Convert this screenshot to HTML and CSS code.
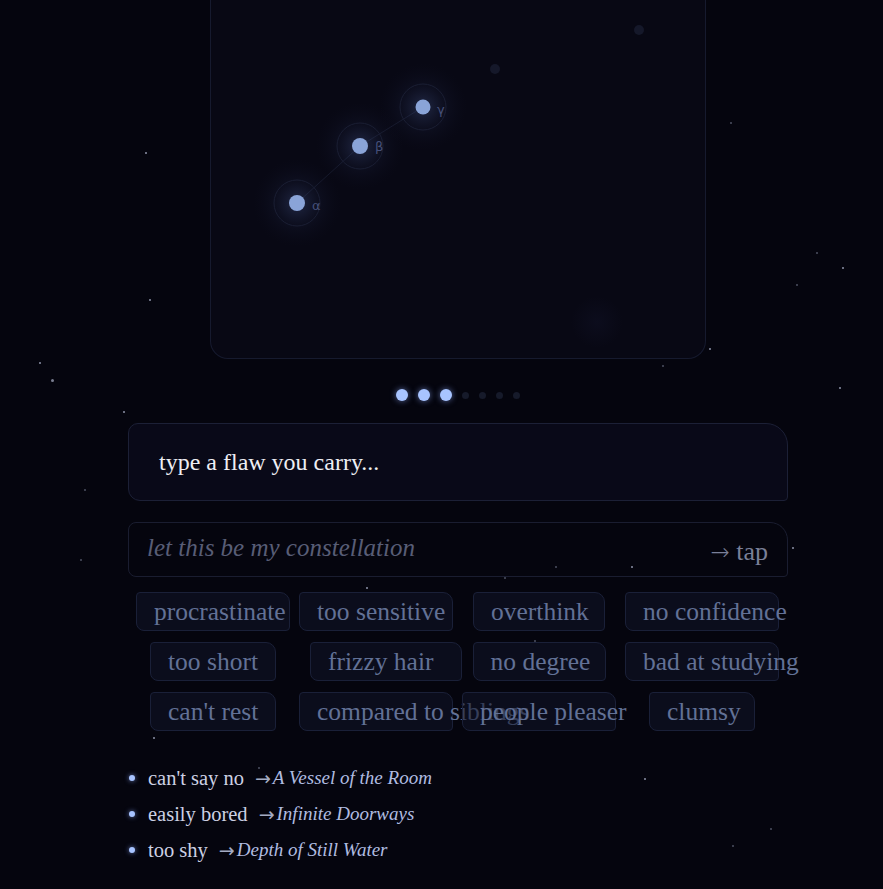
FILE: index.html
```html
<!DOCTYPE html>
<html>

<head>
  <title>constellation of flaws</title>
  <link rel="stylesheet" href="styles.css">
</head>

<body>
  <div class="sky">
    <span class="star" style="left:145px;top:152px"></span>
    <span class="star" style="left:149px;top:299px"></span>
    <span class="star" style="left:39px;top:362px"></span>
    <span class="star big" style="left:51px;top:379px"></span>
    <span class="star" style="left:123px;top:411px"></span>
    <span class="star dim" style="left:84px;top:489px"></span>
    <span class="star dim" style="left:80px;top:559px"></span>
    <span class="star dim" style="left:730px;top:122px"></span>
    <span class="star dim" style="left:816px;top:252px"></span>
    <span class="star" style="left:842px;top:267px"></span>
    <span class="star dim" style="left:796px;top:284px"></span>
    <span class="star" style="left:709px;top:348px"></span>
    <span class="star dim" style="left:662px;top:365px"></span>
    <span class="star" style="left:839px;top:387px"></span>
    <span class="star dim" style="left:424px;top:498px"></span>
    <span class="star dim" style="left:555px;top:566px"></span>
    <span class="star" style="left:631px;top:566px"></span>
    <span class="star dim" style="left:504px;top:577px"></span>
    <span class="star" style="left:792px;top:547px"></span>
    <span class="star" style="left:366px;top:587px"></span>
    <span class="star dim" style="left:534px;top:640px"></span>
    <span class="star" style="left:153px;top:737px"></span>
    <span class="star" style="left:644px;top:778px"></span>
    <span class="star dim" style="left:770px;top:828px"></span>
    <span class="star dim" style="left:732px;top:845px"></span>
    <span class="star dim" style="left:258px;top:767px"></span>
  </div>

  <main class="column">
    <div class="canvas-card">
      <svg class="constellation" width="496" height="359" viewBox="0 0 496 359">
        <defs>
          <radialGradient id="glow">
            <stop offset="0" stop-color="#5c74b8" stop-opacity="0.3" />
            <stop offset="0.5" stop-color="#3a4a80" stop-opacity="0.1" />
            <stop offset="1" stop-color="#1a2040" stop-opacity="0" />
          </radialGradient>
          <radialGradient id="haze">
            <stop offset="0" stop-color="#12142a" stop-opacity="0.4" />
            <stop offset="1" stop-color="#12142a" stop-opacity="0" />
          </radialGradient>
        </defs>
        <circle cx="386" cy="322" r="26" fill="url(#haze)" />
        <circle cx="284" cy="69" r="5" fill="#15182a" />
        <circle cx="428" cy="30" r="5" fill="#15182a" />
        <line x1="86" y1="203" x2="149" y2="146" stroke="#15182a" stroke-width="1" />
        <line x1="149" y1="146" x2="212" y2="107" stroke="#15182a" stroke-width="1" />
        <circle cx="86" cy="203" r="44" fill="url(#glow)" />
        <circle cx="149" cy="146" r="44" fill="url(#glow)" />
        <circle cx="212" cy="107" r="44" fill="url(#glow)" />
        <circle cx="86" cy="203" r="23" fill="none" stroke="#1a1e33" stroke-width="1" />
        <circle cx="149" cy="146" r="23" fill="none" stroke="#1a1e33" stroke-width="1" />
        <circle cx="212" cy="107" r="23" fill="none" stroke="#1a1e33" stroke-width="1" />
        <circle cx="86" cy="203" r="8" fill="#8aa4d8" />
        <circle cx="149" cy="146" r="8" fill="#8aa4d8" />
        <circle cx="212" cy="107" r="7.5" fill="#8aa4d8" />
        <text x="101" y="210" class="greek">α</text>
        <text x="164" y="151" class="greek">β</text>
        <text x="226" y="114" class="greek">γ</text>
      </svg>
    </div>

    <div class="progress">
      <span class="dot lit"></span>
      <span class="dot lit"></span>
      <span class="dot lit"></span>
      <span class="dot"></span>
      <span class="dot"></span>
      <span class="dot"></span>
      <span class="dot"></span>
    </div>

    <div class="flaw-input">type a flaw you carry...</div>

    <div class="wish-input">
      <span class="placeholder">let this be my constellation</span>
      <span class="tap"><span class="tap-arrow">&rarr;</span> tap</span>
    </div>

    <div class="chips">
      <div class="chip" style="width:154px">procrastinate</div>
      <div class="chip" style="width:154px">too sensitive</div>
      <div class="chip" style="width:132px">overthink</div>
      <div class="chip" style="width:154px">no confidence</div>
      <div class="chip" style="width:126px">too short</div>
      <div class="chip" style="width:152px;margin-left:20px">frizzy hair</div>
      <div class="chip" style="width:133px">no degree</div>
      <div class="chip" style="width:154px">bad at studying</div>
      <div class="chip" style="width:126px">can't rest</div>
      <div class="chip" style="width:154px">compared to siblings</div>
      <div class="chip" style="width:154px">people pleaser</div>
      <div class="chip" style="width:106px">clumsy</div>
    </div>

    <ul class="carried">
      <li><span class="flaw">can't say no</span><span class="arrow">&rarr;</span><em>A Vessel of the Room</em></li>
      <li><span class="flaw">easily bored</span><span class="arrow">&rarr;</span><em>Infinite Doorways</em></li>
      <li><span class="flaw">too shy</span><span class="arrow">&rarr;</span><em>Depth of Still Water</em></li>
    </ul>
  </main>
</body>

</html>
```

FILE: styles.css
```css
body {
  margin: 0;
  background-color: #05050e;
  font-family: "Liberation Serif", "DejaVu Serif", serif;
  color: #e6e6f0;
  min-height: 889px;
  overflow: hidden;
}

.sky {
  position: absolute;
  left: 0;
  top: 0;
  width: 883px;
  height: 889px;
  pointer-events: none;
}

.star {
  position: absolute;
  width: 2px;
  height: 2px;
  background-color: #6a6e80;
}

.star.big {
  width: 3px;
  height: 3px;
  border-radius: 50%;
  background-color: #7a7e90;
}

.star.dim {
  background-color: #3a3d4c;
}

.column {
  position: relative;
  width: 660px;
  margin-left: 128px;
}

.canvas-card {
  width: 494px;
  height: 358px;
  margin-left: 82px;
  background-color: #080814;
  border: 1px solid #161a2e;
  border-top: none;
  border-radius: 0 0 18px 18px;
  overflow: hidden;
}

.constellation {
  display: block;
}

.greek {
  font-family: "DejaVu Sans", sans-serif;
  font-size: 13px;
  fill: #46507a;
}

.progress {
  display: flex;
  justify-content: center;
  align-items: center;
  gap: 10px;
  height: 12px;
  margin-top: 30px;
}

.dot {
  width: 7px;
  height: 7px;
  border-radius: 50%;
  background-color: #161a2a;
}

.dot.lit {
  width: 12px;
  height: 12px;
  background-color: #a8c4ff;
  box-shadow: 0 0 6px rgba(140, 170, 255, 0.6);
}

.flaw-input {
  margin-top: 22px;
  height: 76px;
  padding-left: 30px;
  display: flex;
  align-items: center;
  font-size: 24px;
  color: #eeeef4;
  background-color: #090918;
  border: 1px solid #1c2036;
  border-radius: 10px 22px 4px 12px;
}

.wish-input {
  margin-top: 21px;
  height: 53px;
  padding: 0 19px 0 18px;
  display: flex;
  align-items: center;
  justify-content: space-between;
  border: 1px solid #1a1d30;
  border-radius: 8px 18px 4px 8px;
}

.placeholder {
  font-style: italic;
  font-size: 25px;
  color: #585d76;
  margin-top: -3px;
}

.tap {
  font-size: 26px;
  color: #7a8099;
  margin-top: 4px;
}

.tap-arrow {
  font-family: "DejaVu Sans", sans-serif;
  font-size: 23px;
  font-weight: 300;
}

.chips {
  display: grid;
  grid-template-columns: repeat(4, 154px);
  column-gap: 9px;
  row-gap: 11px;
  margin-top: 15px;
  margin-left: 8px;
}

.chip {
  justify-self: center;
  box-sizing: border-box;
  height: 39px;
  padding-left: 17px;
  display: flex;
  align-items: center;
  white-space: nowrap;
  font-size: 25.5px;
  color: #627196;
  background-color: rgba(16, 20, 40, 0.55);
  border: 1px solid #1a2038;
  border-radius: 4px 10px 4px 8px;
}

.carried {
  list-style: none;
  margin: 29px 0 0;
  padding: 0;
}

.carried li {
  display: flex;
  align-items: center;
  height: 36px;
  font-size: 20.5px;
}

.carried li::before {
  content: "";
  width: 6px;
  height: 6px;
  margin: 0 13px 0 1px;
  border-radius: 50%;
  background-color: #a8c4ff;
  box-shadow: 0 0 5px rgba(140, 170, 255, 0.7);
}

.flaw {
  color: #cdd1e4;
}

.arrow {
  margin-left: 11px;
  margin-right: 2px;
  font-family: "DejaVu Sans", sans-serif;
  color: #a4acc4;
  font-size: 19px;
}

.carried em {
  color: #b0bce0;
  font-size: 19px;
}
```
